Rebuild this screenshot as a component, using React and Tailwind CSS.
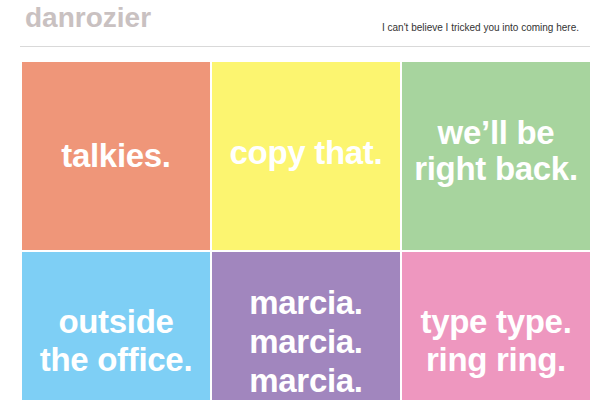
export default function App() {
  const font = { fontFamily: '"Liberation Sans", Arial, sans-serif' };
  const tiles = [
    { bg: "bg-[#ef9679]", lines: ["talkies."], cls: "leading-[37px] pb-[1px]" },
    { bg: "bg-[#fcf570]", lines: ["copy that."], cls: "leading-[37px] pb-[8px]" },
    { bg: "bg-[#a7d49e]", lines: ["we’ll be", "right back."], cls: "leading-[36px] pb-[11px]" },
    { bg: "bg-[#7ecff5]", lines: ["outside", "the office."], cls: "leading-[38px] pb-[11px]" },
    { bg: "bg-[#a186be]", lines: ["marcia.", "marcia.", "marcia."], cls: "leading-[39px] pb-[10px]" },
    { bg: "bg-[#ee97bf]", lines: ["type type.", "ring ring."], cls: "leading-[38px] pb-[11px]" },
  ];
  return (
    <div className="w-[610px] h-[400px] overflow-hidden bg-white" style={font}>
      <div className="ml-[20px] w-[570px]">
        <div className="flex items-start justify-between h-[47px] border-b border-[#d9d9d9]">
          <div className="pl-[5px] pt-[2px] text-[28px] leading-[32px] font-bold text-[#c9c1c1]">
            danrozier
          </div>
          <div className="pr-[11px] pt-[22px] text-[10px] leading-[12px] text-[#333]">
            I can't believe I tricked you into coming here.
          </div>
        </div>
        <div className="mt-[15px] pl-[2px] grid grid-cols-[188px_188px_188px] gap-[2px]">
          {tiles.map((t, i) => (
            <div
              key={i}
              className={`${t.bg} ${t.cls} h-[188px] flex flex-col items-center justify-center text-white font-bold text-[33px] text-center tracking-[-0.3px]`}
            >
              {t.lines.map((l, j) => (
                <div key={j}>{l}</div>
              ))}
            </div>
          ))}
        </div>
      </div>
    </div>
  );
}
